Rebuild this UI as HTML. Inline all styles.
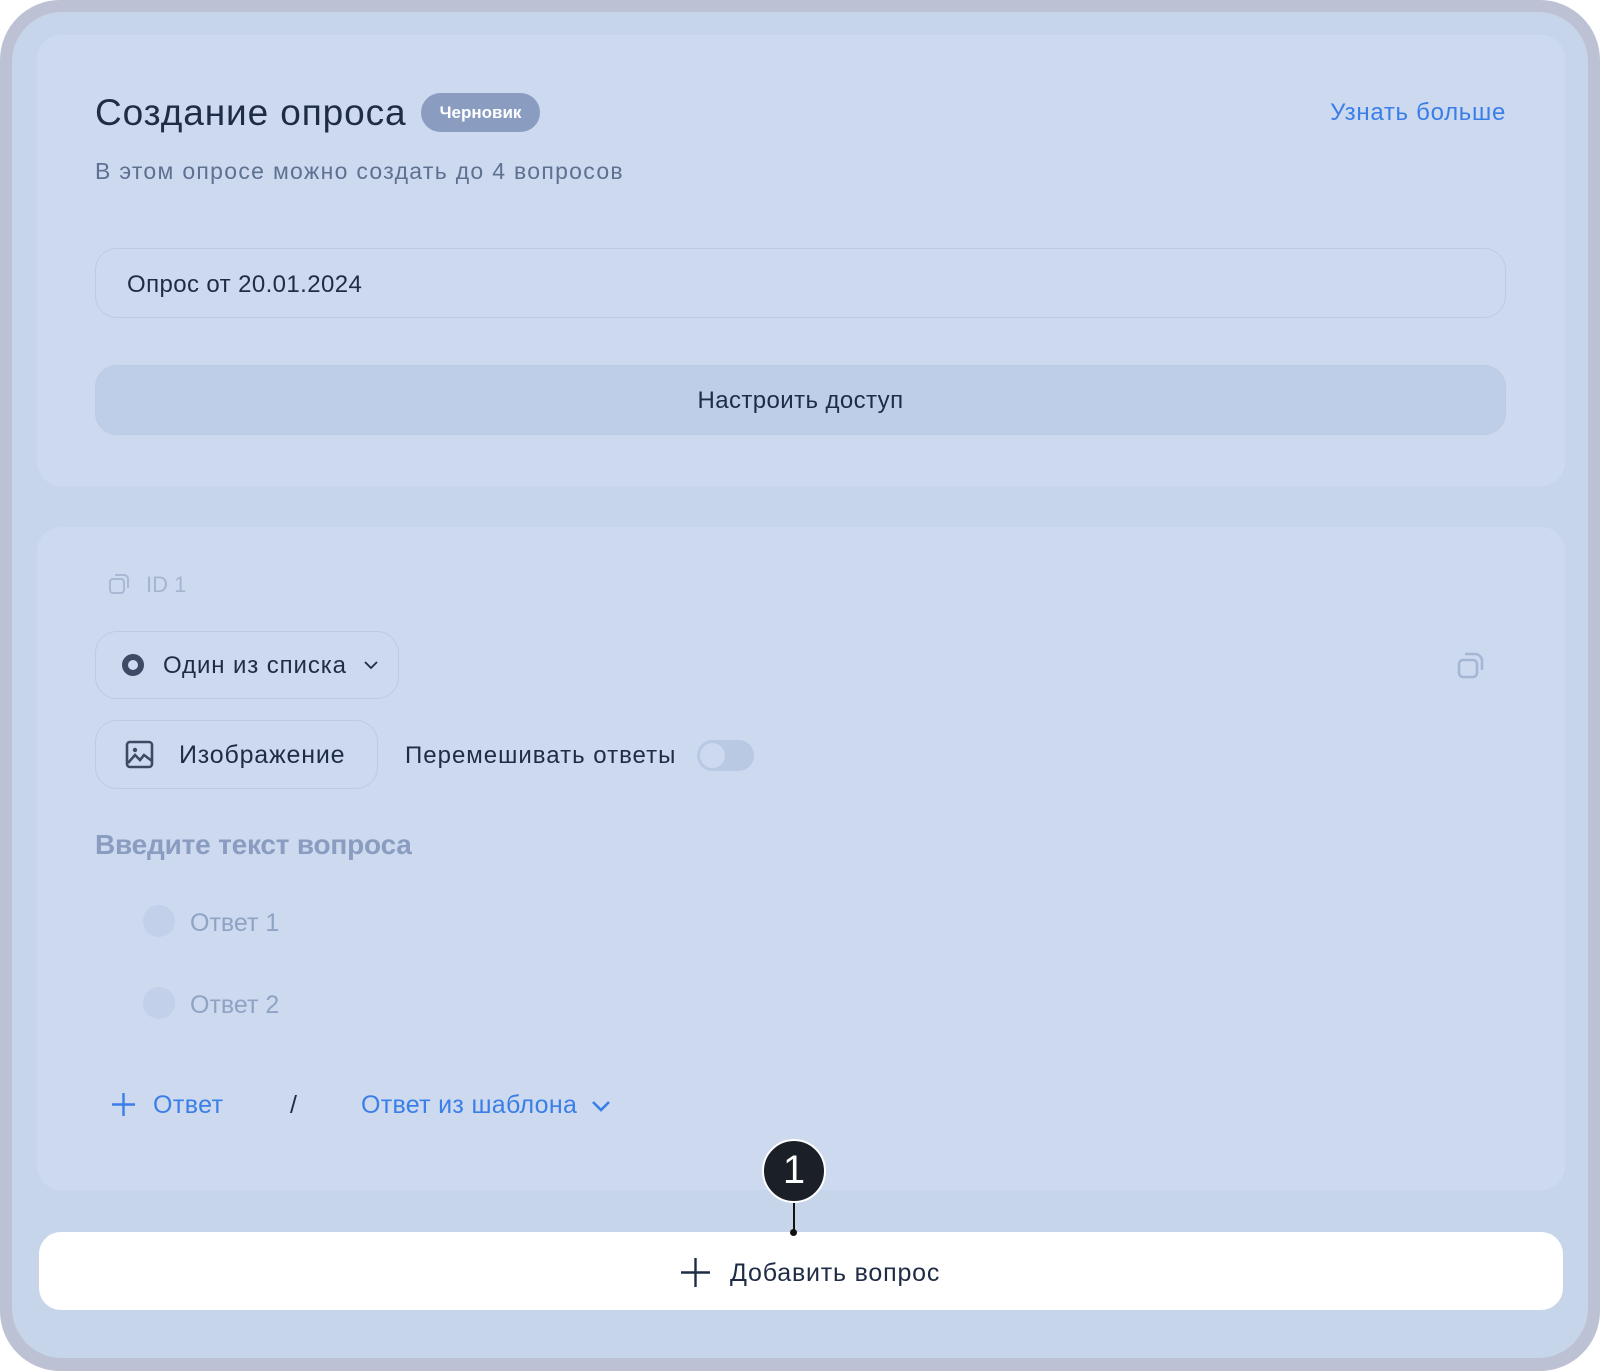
<!DOCTYPE html>
<html><head><meta charset="utf-8"><style>
*{box-sizing:border-box;margin:0;padding:0}
body{width:1600px;height:1371px;background:#fff;font-family:"Liberation Sans",sans-serif;position:relative;overflow:hidden}
.frame{position:absolute;left:0;top:0;width:1600px;height:1371px;border-radius:60px;background:#bcc2d4}
.inner{position:absolute;left:12px;top:12px;width:1576px;height:1346px;border-radius:50px;background:#c7d5eb}
.card{position:absolute;left:37px;width:1528px;background:#ccd9ef;border-radius:24px}
.a{position:absolute;white-space:nowrap}
.box{position:absolute;border:1.5px solid #bccbe4;border-radius:22px}
</style></head><body>
<div class="frame"></div><div class="inner"></div>
<div class="card" style="top:35px;height:451px"></div>
<div class="card" style="top:527px;height:663px"></div>

<div class="a" style="left:95px;top:92px;font-size:37px;color:#1f2c45;letter-spacing:0.9px">Создание опроса</div>
<div class="a" style="left:421px;top:93px;width:119px;height:39px;border-radius:20px;background:#8a9dc0;color:#fff;font-size:17px;font-weight:bold;line-height:39px;text-align:center">Черновик</div>
<div class="a" style="right:94px;top:99px;font-size:24px;color:#3a7ee8;letter-spacing:0.7px">Узнать больше</div>
<div class="a" style="left:95px;top:158px;font-size:23px;color:#5f7191;letter-spacing:1.3px">В этом опросе можно создать до 4 вопросов</div>

<div class="box" style="left:95px;top:248px;width:1411px;height:70px"></div>
<div class="a" style="left:127px;top:271px;font-size:24px;color:#1f2c45;letter-spacing:0.4px">Опрос от 20.01.2024</div>
<div class="box" style="left:95px;top:365px;width:1411px;height:70px;background:#becee8"></div>
<div class="a" style="left:95px;width:1411px;top:387px;font-size:24px;color:#1f2c45;text-align:center;letter-spacing:0.4px">Настроить доступ</div>

<svg class="a" style="left:108px;top:572px" width="24" height="24" viewBox="0 0 24 24" fill="none" stroke="#a9b9d3" stroke-width="2"><rect x="2" y="7" width="14" height="14" rx="3"/><path d="M7 3h9a4 4 0 0 1 4 4v9"/></svg>
<div class="a" style="left:146px;top:572px;font-size:22px;color:#a5b5d0">ID 1</div>

<div class="box" style="left:95px;top:631px;width:304px;height:68px"></div>
<div class="a" style="left:122px;top:654px;width:22px;height:22px;border-radius:50%;border:6px solid #3e4a63;background:#ccd9ef"></div>
<div class="a" style="left:163px;top:652px;font-size:24px;color:#1f2c45;letter-spacing:0.9px">Один из списка</div>
<svg class="a" style="left:362px;top:656px" width="18" height="18" viewBox="0 0 18 18" fill="none" stroke="#1f2c45" stroke-width="1.8"><path d="M3 6l6 6 6-6"/></svg>
<svg class="a" style="left:1456px;top:650px" width="30" height="30" viewBox="0 0 30 30" fill="none" stroke="#a5b6d2" stroke-width="2.5"><rect x="3" y="10" width="18" height="17" rx="4"/><path d="M9 4h10a7 7 0 0 1 7 7v9"/></svg>

<div class="box" style="left:95px;top:720px;width:283px;height:69px"></div>
<svg class="a" style="left:124px;top:739px" width="32" height="32" viewBox="0 0 32 32" fill="none" stroke="#3e4a63" stroke-width="2.6"><rect x="3" y="3" width="25" height="25" rx="3"/><circle cx="11" cy="11" r="2.2" fill="#3e4a63" stroke="none"/><path d="M4 24l7-8 5 5 4-5 8 6"/></svg>
<div class="a" style="left:179px;top:741px;font-size:25px;color:#1f2c45;letter-spacing:0.8px">Изображение</div>
<div class="a" style="left:405px;top:742px;font-size:24px;color:#1f2c45;letter-spacing:1px">Перемешивать ответы</div>
<div class="a" style="left:697px;top:740px;width:57px;height:31px;border-radius:16px;background:#b9c9e3"></div>
<div class="a" style="left:700px;top:743px;width:25px;height:25px;border-radius:50%;background:#ccd9ef"></div>

<div class="a" style="left:95px;top:829px;font-size:28px;font-weight:bold;color:#8a9dc0;letter-spacing:-0.2px">Введите текст вопроса</div>
<div class="a" style="left:143px;top:905px;width:32px;height:32px;border-radius:50%;background:#c2d0e9"></div>
<div class="a" style="left:190px;top:909px;font-size:25px;color:#8fa3c4">Ответ 1</div>
<div class="a" style="left:143px;top:987px;width:32px;height:32px;border-radius:50%;background:#c2d0e9"></div>
<div class="a" style="left:190px;top:991px;font-size:25px;color:#8fa3c4">Ответ 2</div>

<svg class="a" style="left:111px;top:1092px" width="25" height="25" viewBox="0 0 25 25" stroke="#3a7ee8" stroke-width="2.4"><path d="M12.5 1v23M1 12.5h23"/></svg>
<div class="a" style="left:153px;top:1091px;font-size:25px;color:#3a7ee8;letter-spacing:0.4px">Ответ</div>
<div class="a" style="left:290px;top:1091px;font-size:25px;color:#1f2c45">/</div>
<div class="a" style="left:361px;top:1091px;font-size:25px;color:#3a7ee8;letter-spacing:0.3px">Ответ из шаблона</div>
<svg class="a" style="left:590px;top:1096px" width="22" height="20" viewBox="0 0 22 20" fill="none" stroke="#3a7ee8" stroke-width="2.6"><path d="M3 6l8 8 8-8"/></svg>

<div class="a" style="left:39px;top:1232px;width:1524px;height:78px;border-radius:22px;background:#fff"></div>
<svg class="a" style="left:681px;top:1258px" width="29" height="29" viewBox="0 0 29 29" stroke="#1f2c45" stroke-width="2.4"><path d="M14.5 0v29M0 14.5h29"/></svg>
<div class="a" style="left:730px;top:1259px;font-size:25px;color:#1f2c45;letter-spacing:0.8px">Добавить вопрос</div>

<div class="a" style="left:793px;top:1200px;width:2px;height:32px;background:#111"></div>
<div class="a" style="left:790px;top:1229px;width:7px;height:7px;border-radius:50%;background:#111"></div>
<div class="a" style="left:762px;top:1139px;width:64px;height:64px;border-radius:50%;background:#1b1f27;border:2px solid #fff;color:#fff;font-size:40px;line-height:58px;text-align:center">1</div>
</body></html>
